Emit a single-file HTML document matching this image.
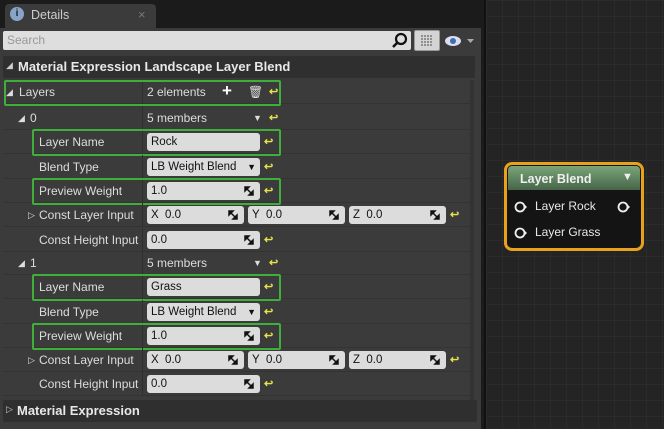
<!DOCTYPE html>
<html><head><style>
*{margin:0;padding:0;box-sizing:border-box}
body{width:664px;height:429px;overflow:hidden;background:#1b1b1b;font-family:"Liberation Sans",sans-serif;font-size:12px;color:#d8d8d8;position:relative}
.a{position:absolute}
.graph{left:484px;top:0;width:180px;height:429px;background-color:#242424;background-image:linear-gradient(#2b2b2b 1px,transparent 1px),linear-gradient(90deg,#2b2b2b 1px,transparent 1px);background-size:16px 16px;border-left:2px solid #111}
.panel{left:0;top:52px;width:481px;height:377px;background:#3b3b3b}
.row{position:absolute;left:4px;width:470px;height:24px;border-bottom:1px solid #333}
.lbl{position:absolute;top:5px;font-size:12px;color:#ddd}
.div{position:absolute;left:138px;top:0;width:1px;height:24px;background:#2f2f2f}
.box{position:absolute;top:3px;height:18px;background:#dcdcdc;border-radius:3px;color:#111;font-size:11.5px;padding:3px 4px 0}
.hl{position:absolute;border:2px solid #3fae3a;border-radius:2px}
.rs{position:absolute;color:#e7e34b;font-size:11px;font-weight:bold;top:5px}
.arr{position:absolute;right:6px;top:4px;width:10px;height:10px}
</style></head><body>
<div class="a graph"></div>
<div class="a" style="left:5px;top:4px;width:151px;height:24px;background:#3b3b3b;border-radius:4px 4px 0 0"></div>
<div class="a" style="left:10px;top:7px;width:14px;height:14px;border-radius:50%;background:#8aa4c8;color:#123;font-size:10px;font-weight:bold;text-align:center;line-height:14px">i</div>
<div class="a" style="left:31px;top:8px;font-size:12.5px;color:#ccc">Details</div>
<div class="a" style="left:138px;top:7px;color:#777;font-size:13px">×</div>
<div class="a" style="left:0;top:28px;width:481px;height:24px;background:#3b3b3b"></div>
<div class="a" style="left:3px;top:31px;width:408px;height:19px;background:#dedede;border-radius:2px;color:#999;font-size:12px;padding:2px 4px">Search</div>
<svg class="a" style="left:391px;top:32px" width="18" height="17"><circle cx="10" cy="7" r="5" fill="none" stroke="#111" stroke-width="2.2"/><line x1="6" y1="11" x2="2" y2="15" stroke="#111" stroke-width="2.5"/></svg>
<div class="a" style="left:414px;top:30px;width:26px;height:21px;background:#d4d4d4;border-radius:2px;border:1px solid #999"></div>
<svg class="a" style="left:420px;top:34px" width="14" height="13"><g stroke="#666" stroke-width="1.2" stroke-dasharray="2 1"><line x1="1" y1="2" x2="13" y2="2"/><line x1="1" y1="5" x2="13" y2="5"/><line x1="1" y1="8" x2="13" y2="8"/><line x1="1" y1="11" x2="13" y2="11"/></g></svg>
<svg class="a" style="left:444px;top:34px" width="32" height="14"><ellipse cx="9" cy="7" rx="8" ry="5" fill="#dde"/><circle cx="9" cy="7" r="3" fill="#3a6fb5"/><path d="M23 5h7l-3.5 4z" fill="#aaa"/></svg>
<div class="a panel"></div>
<div class="a" style="left:3px;top:56px;width:472px;height:22px;background:#2f2f2f;border-radius:2px"></div>
<div class="a" style="left:6px;top:60px;font-size:9px;color:#ccc">◢</div>
<div class="a" style="left:18px;top:59px;font-size:13px;font-weight:bold;color:#e8e8e8">Material Expression Landscape Layer Blend</div>
<div class="a" style="left:470px;top:80px;width:4px;height:320px;background:#333"></div>
<svg width="0" height="0" style="position:absolute"><defs><g id="ar"><path d="M1 1h4l-4 4z M9 9h-4l4-4z M2 2l6 6" fill="#111" stroke="#111" stroke-width="1.5"/></g></defs></svg>
<div class="row" style="top:80px"><div class="div"></div><div class="lbl" style="left:2px;font-size:9px;top:7px">◢</div><div class="lbl" style="left:15px">Layers</div><div class="lbl" style="left:143px">2 elements</div><div class="lbl" style="left:218px;top:1px;font-size:17px;font-weight:bold;color:#fff">+</div><div class="lbl" style="left:244px;font-size:12px;color:#ddd">🗑</div><div class="rs" style="left:265px">↩</div></div>
<div class="hl" style="left:4px;top:80px;width:277px;height:26px"></div>
<div class="row" style="top:106px"><div class="div"></div><div class="lbl" style="left:14px;font-size:9px;top:7px">◢</div><div class="lbl" style="left:26px">0</div><div class="lbl" style="left:143px">5 members</div><div class="lbl" style="left:249px;font-size:9px;top:7px">▼</div><div class="rs" style="left:265px">↩</div></div>
<div class="row" style="top:130px"><div class="div"></div><div class="lbl" style="left:35px">Layer Name</div><div class="box" style="left:143px;width:113px">Rock</div><div class="rs" style="left:260px">↩</div></div>
<div class="hl" style="left:32px;top:129px;width:249px;height:27px"></div>
<div class="row" style="top:155px"><div class="div"></div><div class="lbl" style="left:35px">Blend Type</div><div class="box" style="left:143px;width:113px">LB Weight Blend <span style="position:absolute;right:4px;font-size:9px;top:4px">▼</span></div><div class="rs" style="left:260px">↩</div></div>
<div class="row" style="top:179px"><div class="div"></div><div class="lbl" style="left:35px">Preview Weight</div><div class="box" style="left:143px;width:113px">1.0<svg class="arr"><use href="#ar"/></svg></div><div class="rs" style="left:260px">↩</div></div>
<div class="hl" style="left:32px;top:178px;width:249px;height:27px"></div>
<div class="row" style="top:203px"><div class="div"></div><div class="lbl" style="left:24px;font-size:9px;top:7px">▷</div><div class="lbl" style="left:35px">Const Layer Input</div><div class="box" style="left:143px;width:97px">X&nbsp; 0.0<svg class="arr"><use href="#ar"/></svg></div><div class="box" style="left:244px;width:97px">Y&nbsp; 0.0<svg class="arr"><use href="#ar"/></svg></div><div class="box" style="left:345px;width:97px">Z&nbsp; 0.0<svg class="arr"><use href="#ar"/></svg></div><div class="rs" style="left:446px">↩</div></div>
<div class="row" style="top:228px"><div class="div"></div><div class="lbl" style="left:35px">Const Height Input</div><div class="box" style="left:143px;width:113px">0.0<svg class="arr"><use href="#ar"/></svg></div><div class="rs" style="left:260px">↩</div></div>
<div class="row" style="top:251px"><div class="div"></div><div class="lbl" style="left:14px;font-size:9px;top:7px">◢</div><div class="lbl" style="left:26px">1</div><div class="lbl" style="left:143px">5 members</div><div class="lbl" style="left:249px;font-size:9px;top:7px">▼</div><div class="rs" style="left:265px">↩</div></div>
<div class="row" style="top:275px"><div class="div"></div><div class="lbl" style="left:35px">Layer Name</div><div class="box" style="left:143px;width:113px">Grass</div><div class="rs" style="left:260px">↩</div></div>
<div class="hl" style="left:32px;top:274px;width:249px;height:27px"></div>
<div class="row" style="top:300px"><div class="div"></div><div class="lbl" style="left:35px">Blend Type</div><div class="box" style="left:143px;width:113px">LB Weight Blend <span style="position:absolute;right:4px;font-size:9px;top:4px">▼</span></div><div class="rs" style="left:260px">↩</div></div>
<div class="row" style="top:324px"><div class="div"></div><div class="lbl" style="left:35px">Preview Weight</div><div class="box" style="left:143px;width:113px">1.0<svg class="arr"><use href="#ar"/></svg></div><div class="rs" style="left:260px">↩</div></div>
<div class="hl" style="left:32px;top:323px;width:249px;height:27px"></div>
<div class="row" style="top:348px"><div class="div"></div><div class="lbl" style="left:24px;font-size:9px;top:7px">▷</div><div class="lbl" style="left:35px">Const Layer Input</div><div class="box" style="left:143px;width:97px">X&nbsp; 0.0<svg class="arr"><use href="#ar"/></svg></div><div class="box" style="left:244px;width:97px">Y&nbsp; 0.0<svg class="arr"><use href="#ar"/></svg></div><div class="box" style="left:345px;width:97px">Z&nbsp; 0.0<svg class="arr"><use href="#ar"/></svg></div><div class="rs" style="left:446px">↩</div></div>
<div class="row" style="top:372px"><div class="div"></div><div class="lbl" style="left:35px">Const Height Input</div><div class="box" style="left:143px;width:113px">0.0<svg class="arr"><use href="#ar"/></svg></div><div class="rs" style="left:260px">↩</div></div>
<div class="a" style="left:3px;top:400px;width:474px;height:22px;background:#2f2f2f;border-radius:2px"></div>
<div class="a" style="left:6px;top:404px;font-size:9px;color:#ccc">▷</div>
<div class="a" style="left:17px;top:403px;font-size:13px;font-weight:bold;color:#e8e8e8">Material Expression</div>
<div class="a" style="left:504px;top:162px;width:140px;height:89px;border:3px solid #e8a11c;border-radius:8px;background:#141414"></div>
<div class="a" style="left:508px;top:166px;width:132px;height:24px;background:linear-gradient(#7aa577,#46654a);border-radius:4px 4px 0 0"></div>
<div class="a" style="left:520px;top:172px;font-size:12.5px;font-weight:bold;color:#f0f0f0">Layer Blend</div>
<div class="a" style="left:622px;top:171px;font-size:11px;color:#eee">▼</div>
<svg class="a" style="left:514px;top:200px" width="124" height="40"><circle cx="6" cy="7" r="4.5" fill="none" stroke="#eee" stroke-width="1.8"/><path d="M11 5l2 2-2 2z" fill="#eee"/><circle cx="109" cy="7" r="4.5" fill="none" stroke="#eee" stroke-width="1.8"/><path d="M114 5l2 2-2 2z" fill="#eee"/><circle cx="6" cy="33" r="4.5" fill="none" stroke="#eee" stroke-width="1.8"/><path d="M11 31l2 2-2 2z" fill="#eee"/></svg>
<div class="a" style="left:535px;top:199px;font-size:12px;color:#e8e8e8">Layer Rock</div>
<div class="a" style="left:535px;top:225px;font-size:12px;color:#e8e8e8">Layer Grass</div>
</body></html>
